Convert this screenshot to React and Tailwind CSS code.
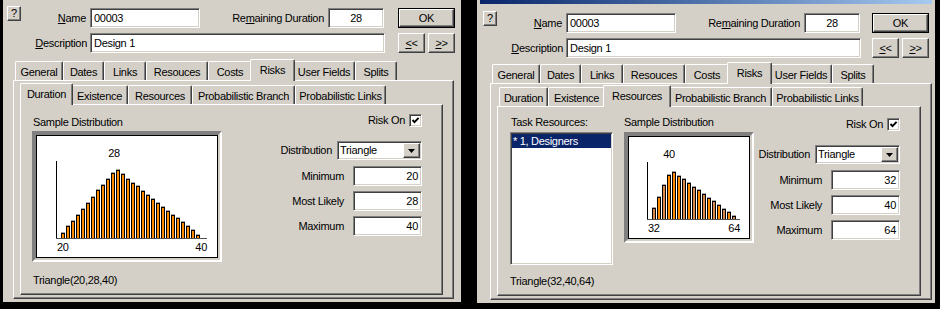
import React from "react";

const FONT = "font-['Liberation_Sans',Arial,sans-serif] text-[11px] leading-[13px] tracking-[-0.3px] text-black";

const SUNKEN =
  "border border-t-[#808080] border-l-[#808080] border-r-white border-b-white shadow-[inset_1px_1px_0_#404040,inset_-1px_-1px_0_#d4d0c8]";
const RAISED =
  "border border-t-white border-l-white border-r-[#404040] border-b-[#404040] shadow-[inset_-1px_-1px_0_#808080]";
const PANEL =
  "border border-t-white border-l-white border-r-[#404040] border-b-[#404040] shadow-[inset_-1px_-1px_0_#808080]";

const LEFT_BARS = [5, 12, 17, 23, 29, 35, 41, 48, 53, 59, 65, 68, 64, 59, 55, 52, 47, 43, 39, 35, 31, 27, 23, 20, 16, 12, 8, 3];
const RIGHT_BARS = [11, 22, 34, 44, 47, 43, 40, 36, 32, 29, 25, 21, 18, 14, 10, 7, 3];
const RIGHT_TAN = [0, 2, 6, 8, 10, 12, 14, 16];

const TOP_TABS = [
  { label: "General", w: "w-[48px]" },
  { label: "Dates", w: "w-[41px]" },
  { label: "Links", w: "w-[42px]" },
  { label: "Resouces", w: "w-[62px]" },
  { label: "Costs", w: "w-[44px]" },
  { label: "Risks", w: "w-[45px]", active: true },
  { label: "User Fields", w: "w-[62px]" },
  { label: "Splits", w: "w-[42px]" },
];

const RISK_TABS_LEFT = [
  { label: "Duration", w: "w-[53px]", active: true },
  { label: "Existence", w: "w-[57px]" },
  { label: "Resources", w: "w-[64px]" },
  { label: "Probabilistic Branch", w: "w-[103px]" },
  { label: "Probabilistic Links", w: "w-[91px]" },
];

const RISK_TABS_RIGHT = [
  { label: "Duration", w: "w-[49px]" },
  { label: "Existence", w: "w-[57px]" },
  { label: "Resources", w: "w-[68px]", active: true },
  { label: "Probabilistic Branch", w: "w-[103px]" },
  { label: "Probabilistic Links", w: "w-[91px]" },
];

function Field({ className = "", children }) {
  return <div className={`flex h-[20px] items-center bg-white px-[3px] ${SUNKEN} ${className}`}>{children}</div>;
}

function Btn({ className = "", children }) {
  return (
    <div className={`flex items-center justify-center bg-[#d4d0c8] ${RAISED} ${className}`}>{children}</div>
  );
}

function TabRow({ tabs, className = "" }) {
  return (
    <div className={`flex items-end pl-[2px] ${className}`}>
      {tabs.map((t) => (
        <div
          key={t.label}
          className={`${t.w} flex shrink-0 items-center justify-center whitespace-nowrap rounded-t-[2px] border-t border-l border-r border-t-white border-l-white border-r-[#404040] bg-[#d4d0c8] shadow-[inset_-1px_0_0_#808080] ${
            t.active ? "relative z-10 -mx-[2px] -mb-px h-[22px] pb-[1px]" : "h-[19px] pt-[2px]"
          }`}
        >
          {t.label}
        </div>
      ))}
    </div>
  );
}

function Chart({ box, w, h, ax, top, ay, right, bx, bars, peak, peakX, lo, hi, tan = [] }) {
  return (
    <div className={`${box} border-2 border-t-[#808080] border-l-[#808080] border-r-white border-b-white`}>
      <div className="h-full w-full border-2 border-t-[#808080] border-l-[#808080] border-r-[#d4d0c8] border-b-[#d4d0c8]">
        <div className="h-full w-full border border-black bg-white">
          <svg width={w} height={h} className="block" fontFamily="Liberation Sans, Arial, sans-serif" fontSize="11">
            <g shapeRendering="crispEdges">
              <line x1={ax + 0.5} y1={top} x2={ax + 0.5} y2={ay + 1} stroke="#000" />
              <line x1={ax} y1={ay + 0.5} x2={right} y2={ay + 0.5} stroke="#505050" />
              {bars.map((bh, i) => {
                const x = bx + 5 * i;
                return (
                  <g key={i}>
                    <rect x={x} y={ay - bh - 1} width={4} height={1} fill="#a8a8a8" />
                    <rect x={x} y={ay - bh} width={4} height={bh} fill="#000" />
                    <rect x={x + 1} y={ay - bh + 1} width={2} height={bh - 1} fill={tan.includes(i) ? "#d88a4c" : "#ff8a00"} />
                  </g>
                );
              })}
            </g>
            <text x={peakX} y={top - 4} textAnchor="middle">
              {peak}
            </text>
            <text x={ax + 1} y={ay + 13}>
              {lo}
            </text>
            <text x={right} y={ay + 13} textAnchor="end">
              {hi}
            </text>
          </svg>
        </div>
      </div>
    </div>
  );
}

function Checkbox() {
  return (
    <div className={`flex h-[13px] w-[13px] items-center justify-center bg-white ${SUNKEN}`}>
      <svg width="9" height="9" viewBox="0 0 9 9">
        <path d="M1.5 4 L3.5 6.2 L7.6 1.8" fill="none" stroke="#000" strokeWidth="1.9" />
      </svg>
    </div>
  );
}

function Select() {
  return (
    <div className={`flex h-[19px] w-[85px] items-center bg-white ${SUNKEN}`}>
      <span className="flex-1 pl-[2px]">Triangle</span>
      <Btn className="mr-[1px] h-[15px] w-[17px]">
        <svg width="7" height="4" viewBox="0 0 7 4">
          <path d="M0 0 H7 L3.5 4 Z" fill="#000" />
        </svg>
      </Btn>
    </div>
  );
}

function ValueRow({ label, value, className = "" }) {
  return (
    <div className={`flex items-center gap-[9px] ${className}`}>
      <span>{label}</span>
      <Field className="w-[69px] justify-end">{value}</Field>
    </div>
  );
}

function RiskControls({ min, likely, max, className }) {
  return (
    <div className={`flex flex-col items-end pr-[20px] ${className}`}>
      <div className="flex h-[13px] items-center gap-[4px]">
        <span>Risk On</span>
        <Checkbox />
      </div>
      <div className="mt-[14px] flex items-center gap-[5px]">
        <span>Distribution</span>
        <Select />
      </div>
      <ValueRow label="Minimum" value={min} className="mt-[6px]" />
      <ValueRow label="Most Likely" value={likely} className="mt-[5px]" />
      <ValueRow label="Maximum" value={max} className="mt-[5px]" />
    </div>
  );
}

function Header({ className = "" }) {
  return (
    <div className={`flex pr-[6px] ${className}`}>
      <div className="flex flex-col gap-[5px]">
        <div className="flex h-[20px] items-center">
          <div className="flex h-full w-[83px] items-center justify-between pl-[4px]">
            <Btn className="-mt-[2px] h-[15px] w-[14px] self-start">?</Btn>
            <span>
              <u>N</u>ame
            </span>
          </div>
          <Field className="ml-[4px] w-[110px]">00003</Field>
          <span className="w-[124px] text-right">
            Re<u>m</u>aining Duration
          </span>
          <Field className="ml-[4px] w-[56px] justify-center">28</Field>
        </div>
        <div className="flex h-[20px] items-center">
          <span className="w-[84px] text-right">
            <u>D</u>escription
          </span>
          <Field className="ml-[3px] w-[295px]">Design 1</Field>
        </div>
      </div>
      <div className="ml-auto flex w-[57px] flex-col gap-[5px]">
        <div className="h-[20px] border border-black">
          <Btn className="h-full w-full">OK</Btn>
        </div>
        <div className="flex justify-between">
          <Btn className="h-[20px] w-[27px]">
            <u>&lt;</u>&lt;
          </Btn>
          <Btn className="h-[20px] w-[27px]">
            <u>&gt;</u>&gt;
          </Btn>
        </div>
      </div>
    </div>
  );
}

function DurationPage() {
  return (
    <div className="flex flex-1 flex-col">
      <div className="flex justify-between">
        <div className="ml-[11px] flex flex-col pt-[11px]">
          <span className="pl-[1px]">Sample Distribution</span>
          <div className="mt-[2px]">
            <Chart
              box="h-[131px] w-[190px]"
              w={180}
              h={121}
              ax={19}
              top={25}
              ay={102}
              right={170}
              bx={24}
              bars={LEFT_BARS}
              peak="28"
              peakX={77}
              lo="20"
              hi="40"
            />
          </div>
        </div>
        <RiskControls min="20" likely="28" max="40" className="pt-[9px]" />
      </div>
      <div className="mt-auto pb-[7px] pl-[12px]">Triangle(20,28,40)</div>
    </div>
  );
}

function ResourcesPage() {
  return (
    <div className="flex flex-1 flex-col">
      <div className="flex justify-between">
        <div className="ml-[12px] flex gap-[11px] pt-[9px]">
          <div className="flex w-[103px] flex-col">
            <span className="pl-[1px]">Task Resources:</span>
            <div className={`mt-[3px] h-[133px] w-[103px] bg-white p-[1px] ${SUNKEN}`}>
              <div className="h-[14px] bg-[#0a246a] pl-[1px] leading-[14px] text-white">* 1, Designers</div>
            </div>
          </div>
          <div className="flex flex-col">
            <span>Sample Distribution</span>
            <div className="mt-[3px]">
              <Chart
                box="h-[111px] w-[130px]"
                w={120}
                h={101}
                ax={18}
                top={25}
                ay={82}
                right={111}
                bx={23}
                bars={RIGHT_BARS}
                peak="40"
                peakX={40}
                lo="32"
                hi="64"
                tan={RIGHT_TAN}
              />
            </div>
          </div>
        </div>
        <RiskControls min="32" likely="40" max="64" className="pt-[11px]" />
      </div>
      <div className="mt-auto pb-[7px] pl-[12px]">Triangle(32,40,64)</div>
    </div>
  );
}

function Dialog({ right = false }) {
  return (
    <div
      className={`flex w-[458px] shrink-0 flex-col bg-[#d4d0c8] pb-[3px] ${
        right ? "ml-[16px] h-[303px]" : "ml-[3px] h-[302px]"
      }`}
    >
      {right ? <div className="mx-[3px] h-[4px] bg-linear-to-r from-[#0a246a] to-[#a6caf0]" /> : null}
      <Header className={right ? "mt-[9px] pl-[2px]" : "mt-[8px]"} />
      <div className={`flex flex-1 flex-col ${right ? "mt-[4px] pl-[13px] pr-[3px]" : "mt-[6px] pl-[10px] pr-[7px]"}`}>
        <TabRow tabs={TOP_TABS} />
        <div className={`flex flex-1 flex-col bg-[#d4d0c8] pl-[6px] pr-[10px] pb-[3px] ${PANEL}`}>
          <TabRow tabs={right ? RISK_TABS_RIGHT : RISK_TABS_LEFT} className={right ? "mt-[1px]" : "mt-[2px]"} />
          <div className={`flex flex-1 flex-col bg-[#d4d0c8] ${PANEL}`}>
            {right ? <ResourcesPage /> : <DurationPage />}
          </div>
        </div>
      </div>
    </div>
  );
}

export default function App() {
  return (
    <div className={`flex h-[309px] w-[940px] items-start overflow-hidden bg-black ${FONT}`}>
      <Dialog />
      <Dialog right />
    </div>
  );
}
